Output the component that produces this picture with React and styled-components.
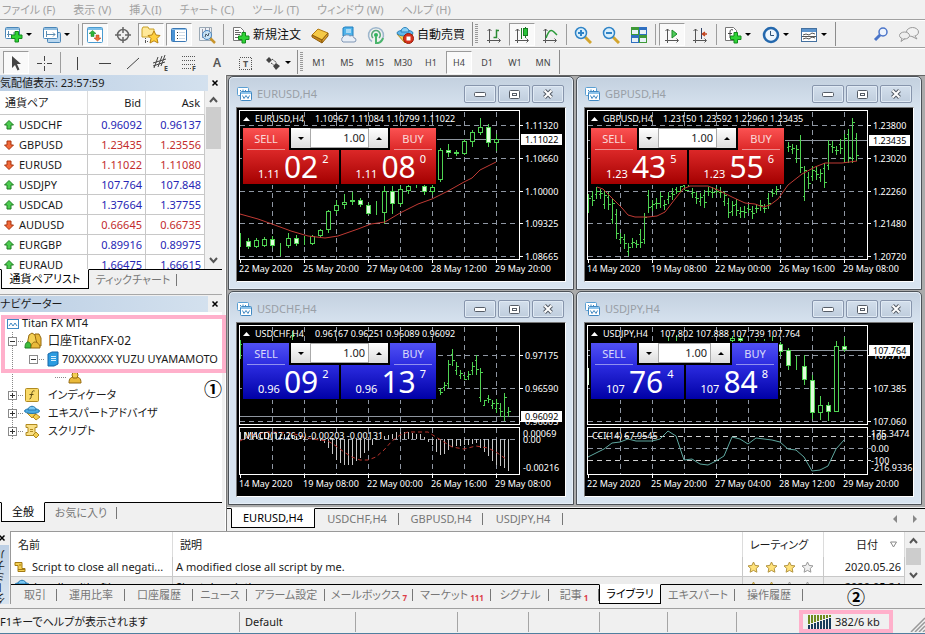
import React from 'react'
import styled, { createGlobalStyle, css } from 'styled-components'

const GlobalStyle = createGlobalStyle`
  * {
    box-sizing: border-box;
  }
  body {
    margin: 0;
    background: #f0f0f0;
    color: #1a1a1a;
    font: 11px/16px "Noto Sans", "Noto Sans CJK JP", sans-serif;
    font-feature-settings: "palt";
  }
  button, input {
    font: inherit;
    font-feature-settings: inherit;
    color: inherit;
    padding: 0;
    margin: 0;
    border: 0;
    border-radius: 0;
    background: none;
  }
  svg {
    display: block;
    flex: none;
  }
`

/* ---------- icons ---------- */

const Svg = ({ w = 18, h = 18, children }) => (
  <svg width={w} height={h} viewBox={`0 0 ${w} ${h}`} fill="none" aria-hidden="true">
    {children}
  </svg>
)

const Plus = ({ x = 7, y = 6 }) => (
  <path
    transform={`translate(${x} ${y})`}
    d="M4 .5h3.500V4H11v3.500H7.500V11H4V7.500H.5V4H4z"
    fill="#2fd336"
    stroke="#128a1c"
  />
)

const Axes = () => (
  <path d="M4.500 3v11.500H15M2.500 5l2-2 2 2M13.500 12.500l2 2-2 2M2 14.500h2.500V17" stroke="#555" />
)

const icons = {
  newChart: (
    <Svg>
      <rect x=".5" y="1.500" width="14" height="11" rx="1" fill="#fff" stroke="#4a86b8" />
      <path d="M1 3h13" stroke="#8fbde0" strokeWidth="2" />
      <path d="M3.500 5v6M2 8.500h5M9 6v3" stroke="#5a8bb0" />
      <Plus x={6} y={5} />
    </Svg>
  ),
  profiles: (
    <Svg>
      <rect x="4.500" y="6.500" width="13" height="10" rx="1" fill="#b9d7ef" stroke="#4a86b8" />
      <rect x=".5" y="1.500" width="14" height="11" rx="1" fill="#fff" stroke="#4a86b8" />
      <path d="M1 3h13" stroke="#8fbde0" strokeWidth="2" />
      <path d="M3.500 5v6M3 8.500h9M10 6.500l2 2-2 2" stroke="#5a8bb0" />
    </Svg>
  ),
  market: (
    <Svg>
      <rect x="1.500" y="1.500" width="15" height="15" rx="1" fill="#fff" stroke="#4a9bd0" />
      <path d="M2 3h14" stroke="#7fc0ea" strokeWidth="2" />
      <path d="M6.500 4.500l3.500 3H8v3H5v-3H3z" fill="#2fb53a" stroke="#177a20" strokeWidth=".5" />
      <path d="M11.500 15l3.500-3h-2V9h-3v3H8z" fill="#f07038" stroke="#b03a10" strokeWidth=".5" />
    </Svg>
  ),
  crosshair: (
    <Svg>
      <circle cx="9" cy="9" r="5.500" stroke="#666" strokeWidth="1.500" />
      <path d="M9 1v6M9 11v6M1 9h6M11 9h6" stroke="#666" strokeWidth="1.500" />
    </Svg>
  ),
  navigator: (
    <Svg w={20}>
      <path d="M1 3l1-2h5l1 2h5v8H1z" fill="#ffe99a" stroke="#c8a028" />
      <path d="M4.500 12v6M4 15.500h4" stroke="#555" strokeDasharray="1 1" />
      <path d="M13 5l2 4 4 .5-3 3 1 4.500-4-2.200L9 17l1-4.500-3-3 4-.5z" fill="#ffcf3c" stroke="#b98413" />
    </Svg>
  ),
  terminal: (
    <Svg>
      <rect x="1.500" y="2.500" width="15" height="13" rx="1" fill="#fff" stroke="#3a78b5" />
      <rect x="2" y="3" width="3" height="12" fill="#4b93d4" />
      <path d="M2 3.500h14" stroke="#8fc0e8" />
      <path d="M7 6.500h1M7 9.500h1M7 12.500h1" stroke="#333" />
      <path d="M9 6.500h6M9 9.500h6M9 12.500h6" stroke="#cfdbe6" />
    </Svg>
  ),
  tester: (
    <Svg>
      <path d="M1.500 1.500h12v13h-12z" fill="#eef2f6" stroke="#9aa8b4" />
      <path d="M4.500 3v9M7.500 2v10M11.500 2v5" stroke="#99a" />
      <path d="M12 12l5 5" stroke="#c8952c" strokeWidth="2.500" />
      <circle cx="9" cy="9" r="4.500" fill="#bfe0f7" fillOpacity=".8" stroke="#4a86c0" />
      <path d="M7 11l1-3 2 2 1-3" stroke="#456" />
    </Svg>
  ),
  newOrder: (
    <Svg>
      <path d="M1.500 1.500h7l3 3v10h-10z" fill="#fff" stroke="#777" />
      <path d="M3 4.500h4M3 6.500h6M3 8.500h5M3 11.500h3" stroke="#666" />
      <Plus x={6} y={6} />
    </Svg>
  ),
  metaEditor: (
    <Svg>
      <path d="M1 9l6-6 10 4-6 7z" fill="#f5c945" stroke="#b27a12" />
      <path d="M1 9l10 5v3L1 11z" fill="#c98a1a" stroke="#8f5d0c" />
      <path d="M11 14l6-7v3l-6 7z" fill="#e0a52c" stroke="#8f5d0c" />
    </Svg>
  ),
  cloud: (
    <Svg>
      <path d="M4 2l2-1h8v9H4z" fill="#4fb3ea" stroke="#1f7fbf" />
      <path d="M7 4h5M7 6h5" stroke="#fff" />
      <path d="M4 16a3 3 0 010-5 4 3 0 017-1 3 3 0 014 2 2 2 0 010 4z" fill="#e9eff7" stroke="#7f96b5" />
    </Svg>
  ),
  signals: (
    <Svg>
      <path d="M5 15.500a7.500 7.500 0 118 0" stroke="#9db6cc" strokeWidth="1.500" />
      <path d="M6 12a4.300 4.300 0 116 0" stroke="#58a878" strokeWidth="1.500" />
      <circle cx="9" cy="9" r="2" fill="#2fb35a" />
      <path d="M9 10v7h2a7 7 0 005-5" stroke="#4bb56c" strokeWidth="2" />
    </Svg>
  ),
  auto: (
    <Svg>
      <path d="M1 8l8 9 8-9z" fill="#f3cf52" stroke="#b98a1c" />
      <ellipse cx="9" cy="7" rx="8" ry="3" fill="#62b7ea" stroke="#2b83bd" />
      <path d="M5 6c0-6 8-6 8 0z" fill="#8bd0f5" stroke="#2b83bd" />
      <circle cx="12.500" cy="12.500" r="5" fill="#d9321c" stroke="#96190a" />
      <rect x="10.500" y="10.500" width="4" height="4" fill="#fff" />
    </Svg>
  ),
  bars: (
    <Svg>
      <Axes />
      <path d="M8.500 11.500h3V3.500M11.500 4.500h2.500" stroke="#2a8a34" strokeWidth="1.500" />
    </Svg>
  ),
  candles: (
    <Svg>
      <Axes />
      <path d="M8.500 2v11M12.500 1v11" stroke="#197a22" />
      <rect x="10.500" y="2.500" width="4" height="7" fill="#28c438" stroke="#197a22" />
    </Svg>
  ),
  line: (
    <Svg>
      <Axes />
      <path d="M5 12c3-8 5-9 8-6l3 3" stroke="#2a9a38" strokeWidth="1.500" />
    </Svg>
  ),
  zoomIn: (
    <Svg>
      <path d="M11 11l6 6" stroke="#d3a52e" strokeWidth="3" />
      <circle cx="7" cy="7" r="5.500" fill="#d9effc" stroke="#2f83c6" strokeWidth="1.500" />
      <path d="M7 4v6M4 7h6" stroke="#2f83c6" strokeWidth="2" />
    </Svg>
  ),
  zoomOut: (
    <Svg>
      <path d="M11 11l6 6" stroke="#d3a52e" strokeWidth="3" />
      <circle cx="7" cy="7" r="5.500" fill="#d9effc" stroke="#2f83c6" strokeWidth="1.500" />
      <path d="M4 7h6" stroke="#2f83c6" strokeWidth="2" />
    </Svg>
  ),
  tile: (
    <Svg>
      <path d="M1 1h8v8H1zM9 9h8v8H9z" fill="#3f9a38" />
      <path d="M9 1h8v8H9zM1 9h8v8H1z" fill="#2f6fc0" />
      <path d="M2 4h6v4H2zM10 4h6v4h-6zM2 12h6v4H2zM10 12h6v4h-6z" fill="#e8f2f8" />
    </Svg>
  ),
  scroll: (
    <Svg>
      <Axes />
      <path d="M9 4l5 4-5 4z" fill="#4ccb58" stroke="#1c8a28" />
    </Svg>
  ),
  shift: (
    <Svg>
      <Axes />
      <path d="M10.500 2v11" stroke="#346" />
      <path d="M16 8h-4M14 6l-2.500 2 2.500 2" stroke="#c0401c" strokeWidth="1.500" />
    </Svg>
  ),
  indicators: (
    <Svg>
      <path d="M1.500 1.500h8l3 3v10h-11z" fill="#fff" stroke="#777" />
      <path d="M9 4c-2-1-3 0-3 2v6M4 7.500h4" stroke="#444" />
      <Plus x={6} y={6} />
    </Svg>
  ),
  clock: (
    <Svg>
      <circle cx="9" cy="9" r="7" fill="#eef6fd" stroke="#2468ad" strokeWidth="2.500" />
      <path d="M8.500 5v4.500H12" stroke="#357" />
    </Svg>
  ),
  template: (
    <Svg>
      <rect x="1.500" y="2.500" width="15" height="13" fill="#fff" stroke="#44709f" />
      <path d="M2 4.500h14" stroke="#5d95cf" strokeWidth="3" />
      <path d="M3 9l3-1 3 1 3-2 3 1M3 13l3-1 3 1 3-2 3 1M2 10.500h14" stroke="#555" />
    </Svg>
  ),
  search: (
    <Svg>
      <path d="M3 15l6-6" stroke="#4a74c8" strokeWidth="3" />
      <circle cx="11" cy="7" r="4" fill="#eef4fd" stroke="#4a74c8" strokeWidth="1.500" />
    </Svg>
  ),
  chat: (
    <Svg w={22}>
      <ellipse cx="14.500" cy="7" rx="6" ry="4.500" fill="#f2f2f2" stroke="#999" />
      <path d="M17 11l2 3-5-2.500" fill="#f2f2f2" stroke="#999" />
      <ellipse cx="6.500" cy="10.500" rx="5" ry="3.500" fill="#eee" stroke="#999" />
      <path d="M4 13.500l-1 3 4-3" fill="#eee" stroke="#999" />
    </Svg>
  ),
  pointer: (
    <Svg>
      <path d="M5 2v12l3-3 2.500 5.500 2-1L10 10h4z" fill="#444" />
    </Svg>
  ),
  cross: (
    <Svg>
      <path d="M9.500 2v5M9.500 12v5M2 9.500h5M12 9.500h5M9 9.500h1" stroke="#444" />
    </Svg>
  ),
  vline: (
    <Svg>
      <path d="M9.500 3v13" stroke="#444" />
    </Svg>
  ),
  hline: (
    <Svg>
      <path d="M3 9.500h12" stroke="#444" />
    </Svg>
  ),
  trend: (
    <Svg>
      <path d="M3 15L15 4" stroke="#444" />
    </Svg>
  ),
  channel: (
    <Svg>
      <path d="M1 9l13-4M1 12l12-4M2 14l4-11M6 13l4-11M9 12l4-11" stroke="#444" />
      <text x="12" y="17" fontSize="7" fontWeight="700" fill="#444">E</text>
    </Svg>
  ),
  fibo: (
    <Svg>
      <path d="M2 2.500h13M2 6.500h13M2 10.500h13M2 14.500h9" stroke="#555" strokeDasharray="1 1" />
      <text x="12" y="17" fontSize="7" fontWeight="700" fill="#444">F</text>
    </Svg>
  ),
  label: (
    <Svg>
      <rect x="3.500" y="3.500" width="12" height="12" stroke="#555" strokeDasharray="1 1" shapeRendering="crispEdges" />
      <text x="7" y="13" fontSize="9" fontWeight="700" fill="#555">T</text>
    </Svg>
  ),
  arrows: (
    <Svg>
      <path d="M2 6l3-3 3 3-3 3zM9 12l3-3 4 3-4 4z" fill="#444" />
      <path d="M7 9l3 2M8 5l5 4" stroke="#444" strokeDasharray="2 1" />
    </Svg>
  ),
  windowChart: (
    <Svg w={15} h={15}>
      <rect x=".5" y=".5" width="11" height="8" rx="1" fill="#fff" stroke="#5a9fd2" />
      <path d="M3 3.500h1M6 2.500v2M8 3.500h1" stroke="#3f88c2" />
      <rect x="3.500" y="4.500" width="11" height="9" rx="1" fill="#fff" stroke="#3f88c2" />
      <path d="M4 6h10" stroke="#8fc4ea" strokeWidth="2" />
      <path d="M5.500 8.500l1.500 3 2-3 2 3 1.500-3" stroke="#3f88c2" />
    </Svg>
  ),
  up: (
    <Svg w={12} h={12}>
      <path d="M6 1.500l4.500 4.500H8v4H4V6H1.500z" fill="#4ccb4f" stroke="#1e7d22" />
    </Svg>
  ),
  down: (
    <Svg w={12} h={12}>
      <path d="M6 10.500L1.500 6H4V2h4v4h2.500z" fill="#f2693a" stroke="#a8340f" />
    </Svg>
  ),
  terminalRoot: (
    <Svg w={12} h={14}>
      <rect x=".5" y="3.500" width="11" height="9" fill="#fff" stroke="#3f88c2" />
      <path d="M2 10l2-3 2 3 2-3 2 3" stroke="#3f88c2" />
    </Svg>
  ),
  accounts: (
    <Svg>
      <path d="M9 8l2-6h4l2 4v8H9z" fill="#e9b93a" stroke="#94690f" />
      <path d="M4 8l1-5 3-2 3 2 1 5 2 6H3z" fill="#f4d054" stroke="#94690f" />
      <path d="M1 16c0-4 1-6 3-6s3 2 3 6z" fill="#3dbd3d" stroke="#1e7d22" />
      <path d="M7 16c0-4 2-6 4-6s5 2 5 6z" fill="#e9b93a" stroke="#94690f" />
    </Svg>
  ),
  server: (
    <Svg w={14} h={16}>
      <path d="M3 3l4-2h6v12l-4 2H3z" fill="#2b9be0" stroke="#1667a8" />
      <path d="M6 5.500h5M6 7.500h5M6 9.500h5" stroke="#d6efff" />
    </Svg>
  ),
  user: (
    <Svg w={14} h={14}>
      <path d="M1 13c0-5 2-6 6-6s6 1 6 6z" fill="#e9b93a" stroke="#94690f" />
      <path d="M4 5l1-3 2 1 2-1 1 3-1 3H5z" fill="#f4d054" stroke="#94690f" />
    </Svg>
  ),
  func: (
    <Svg h={16}>
      <rect x="1.500" y="1.500" width="13" height="13" rx="1" fill="#f9d968" stroke="#b08a20" />
      <path d="M10.500 4C8 3 8 6 7.500 8S7 12 5.500 12M5.500 7.500h4" stroke="#5d4a10" />
    </Svg>
  ),
  expert: (
    <Svg h={16}>
      <path d="M3 8l5 5 4-5z" fill="#f3cf52" stroke="#b98a1c" />
      <path d="M9 12l3-3 4 3-4 3z" fill="#f3cf52" stroke="#b98a1c" />
      <ellipse cx="8" cy="6" rx="7.500" ry="2.500" fill="#4aa9e0" stroke="#2478b0" />
      <path d="M4 5c0-5 8-5 8 0z" fill="#79c6f2" stroke="#2478b0" />
    </Svg>
  ),
  script: (
    <Svg h={16}>
      <path d="M2 1.500h11v3h-2v5h1v3H2v-3h2v-5H2z" fill="#f9df85" stroke="#b08a20" />
      <path d="M6 6.500h3M6 8.500h3" stroke="#b08a20" />
      <path d="M9 12l3-3 3 3-3 3z" fill="#f3cf52" stroke="#b08a20" />
    </Svg>
  ),
  scriptFile: (
    <Svg w={12} h={12}>
      <path d="M1 1.500h7v6h3v3H4v-6H1z" fill="#f4d054" stroke="#a37a12" />
      <path d="M4 8.500h7M5 4h2" stroke="#a37a12" />
    </Svg>
  ),
}

/* ---------- toolbars ---------- */

const Page = styled.div`
  min-height: 100vh;
  display: flex;
  flex-direction: column;
  overflow: hidden;
`
const MenuBar = styled.nav`
  height: 19px;
  display: flex;
  gap: 18px;
  padding-left: 2px;
  background: #f1f1f1;
`
const MenuItem = styled.button`
  color: #a2a2a2;
  line-height: 18px;
  white-space: nowrap;
`
const ToolRow = styled.div`
  height: 28px;
  display: flex;
  border-top: 1px solid #a0a0a0;
  box-shadow: inset 0 1px #fff;
  justify-content: space-between;
`
const Tools = styled.div`
  display: flex;
  align-items: center;
  padding: ${p => (p.$lead ? '1px 0 0 2px' : '1px 2px 0 0')};
  border-right: ${p => (p.$plain ? 0 : '1px solid #8c8c8c')};
`
const ToolButton = styled.button`
  height: 23px;
  width: ${p => (p.$wide ? 78 : p.$menu ? 36 : 26)}px;
  margin: 0 1px;
  flex: none;
  display: flex;
  align-items: center;
  justify-content: ${p => (p.$wide || p.$menu ? 'flex-start' : 'center')};
  gap: 3px;
  padding-left: ${p => (p.$wide ? 5 : p.$menu ? 4 : 0)}px;
  white-space: nowrap;
  font-size: ${p => (p.$wide ? 12 : 9)}px;
  color: ${p => (p.$wide ? '#111' : '#444')};
  ${p =>
    p['aria-pressed'] &&
    css`
      background: #f9f9f9;
      border: 1px solid #fff;
      border-top-color: #9a9a9a;
      border-left-color: #9a9a9a;
    `}
`
const Letter = styled.span`
  font-size: 12px;
  font-weight: 600;
  color: #555;
`
const Sep = styled.i`
  width: 5px;
  height: 21px;
  flex: none;
  background: linear-gradient(#9d9d9d, #9d9d9d) 2px 0 / 1px 100% no-repeat;
`
const Grip = styled.i`
  width: 3px;
  height: 20px;
  margin: 0 2px;
  background: repeating-linear-gradient(#999 0 1px, #f0f0f0 1px 2px);
`
const Caret = styled.i`
  border: 3px solid transparent;
  border-top-color: #000;
  border-bottom: 0;
`

const Tool = ({ icon, label, pressed, menu, wide }) => (
  <ToolButton aria-label={label} aria-pressed={pressed} $menu={menu} $wide={wide}>
    {icons[icon] || label}
    {wide && label}
    {menu && <Caret />}
  </ToolButton>
)

const menus = ['ファイル (F)', '表示 (V)', '挿入(I)', 'チャート (C)', 'ツール (T)', 'ウィンドウ (W)', 'ヘルプ (H)']
const periods = ['M1', 'M5', 'M15', 'M30', 'H1', 'H4', 'D1', 'W1', 'MN']

const Toolbars = () => (
  <>
    <MenuBar>
      {menus.map(m => (
        <MenuItem key={m}>{m}</MenuItem>
      ))}
    </MenuBar>
    <ToolRow>
      <Tools $plain>
        <Tools>
          <Tool icon="newChart" label="New chart" menu />
          <Tool icon="profiles" label="Profiles" menu />
          <Sep />
          <Tool icon="market" label="Market watch" pressed />
          <Tool icon="crosshair" label="Data window" />
          <Tool icon="navigator" label="Navigator" pressed />
          <Tool icon="terminal" label="Terminal" pressed />
          <Tool icon="tester" label="Strategy tester" />
          <Sep />
          <Tool icon="newOrder" label="新規注文" wide />
          <Tool icon="metaEditor" label="MetaEditor" />
          <Tool icon="cloud" label="Hosting" />
          <Tool icon="signals" label="Signals" />
          <Tool icon="auto" label="自動売買" wide />
        </Tools>
        <Grip />
        <Tools>
          <Tool icon="bars" label="Bar chart" />
          <Tool icon="candles" label="Candlesticks" pressed />
          <Tool icon="line" label="Line chart" />
          <Sep />
          <Tool icon="zoomIn" label="Zoom in" />
          <Tool icon="zoomOut" label="Zoom out" />
          <Tool icon="tile" label="Tile windows" />
          <Sep />
          <Tool icon="scroll" label="Auto scroll" pressed />
          <Tool icon="shift" label="Chart shift" />
          <Sep />
          <Tool icon="indicators" label="Indicators" menu />
          <Tool icon="clock" label="Periods" menu />
          <Tool icon="template" label="Templates" menu />
        </Tools>
      </Tools>
      <Tools $plain>
        <Tool icon="search" label="Search" />
        <Tool icon="chat" label="Chat" />
      </Tools>
    </ToolRow>
    <ToolRow>
      <Tools $plain>
        <Tools $lead>
          <Tool icon="pointer" label="Cursor" pressed />
          <Tool icon="cross" label="Crosshair" />
          <Sep />
          <Tool icon="vline" label="Vertical line" />
          <Tool icon="hline" label="Horizontal line" />
          <Tool icon="trend" label="Trendline" />
          <Tool icon="channel" label="Channel" />
          <Tool icon="fibo" label="Fibonacci" />
          <ToolButton>
            <Letter>A</Letter>
          </ToolButton>
          <Tool icon="label" label="Text label" />
          <Tool icon="arrows" label="Arrows" menu />
        </Tools>
        <Grip />
        <Tools>
          {periods.map(p => (
            <Tool key={p} label={p} pressed={p === 'H4' || undefined} />
          ))}
        </Tools>
      </Tools>
    </ToolRow>
  </>
)

/* ---------- shared panel parts ---------- */

const PanelTitle = styled.div`
  height: 16px;
  display: flex;
  justify-content: space-between;
  align-items: center;
  background: linear-gradient(90deg, #bccfe4, #d5e2ef);
`
const Close = styled.button`
  width: 14px;
  height: 16px;
  background: #f0f0f0;
  display: grid;
  place-items: center;
`
const CloseIcon = () => (
  <Svg w={8} h={8}>
    <path d="M1.500 1.500l5 5M6.500 1.500l-5 5" stroke="#000" strokeWidth="1.500" />
  </Svg>
)

const TabBar = styled.div`
  height: 20px;
  display: flex;
  border-top: 1px solid #000;
  padding-left: ${p => p.$indent || 1}px;
`
const Tab = styled.button`
  width: ${p => p.$width}px;
  display: flex;
  align-items: center;
  justify-content: center;
  white-space: nowrap;
  color: #777;
  background: linear-gradient(#777, #777) right 4px / 1px 12px no-repeat;
  ${p =>
    p.$active &&
    css`
      margin-top: -1px;
      color: #000;
      background: #fff;
      border: 1px solid #000;
      border-top-color: #fff;
    `}
`
const Count = styled.sub`
  font-size: 8px;
  line-height: 12px;
  font-weight: 700;
  color: #dc3c46;
  align-self: flex-end;
  margin-left: 2px;
`
const Tabs = ({ items, active, indent }) => (
  <TabBar $indent={indent}>
    {items.map(([name, width, count]) => (
      <Tab key={name} $width={width} $active={name === active}>
        {name}
        {count && <Count>{count}</Count>}
      </Tab>
    ))}
  </TabBar>
)

const Track = styled.div`
  width: 17px;
  flex: none;
  display: flex;
  flex-direction: column;
  align-items: center;
  justify-content: space-between;
  padding: 5px 0;
  background: #f0f0f0;
`
const Thumb = styled.i`
  width: 15px;
  height: ${p => p.$size}px;
  margin: 4px 0 auto;
  background: #cdcdcd;
`
const Scrollbar = ({ size }) => (
  <Track>
    <Svg w={9} h={7}>
      <path d="M1 6l3.500-4L8 6" stroke="#555" strokeWidth="2" />
    </Svg>
    <Thumb $size={size} />
    <Svg w={9} h={7}>
      <path d="M1 1l3.500 4L8 1" stroke="#555" strokeWidth="2" />
    </Svg>
  </Track>
)

/* ---------- market watch ---------- */

const Sidebar = styled.aside`
  width: 226px;
  flex: none;
  display: flex;
  flex-direction: column;
  padding-right: 3px;
  border-right: 1px solid #fff;
  position: relative;
`
const Scroller = styled.div`
  height: ${p => p.$height}px;
  display: flex;
  overflow: hidden;
  background: #fff;
`
const Table = styled.table`
  flex: 1;
  width: 100%;
  align-self: flex-start;
  table-layout: fixed;
  border-collapse: separate;
  border-spacing: 0;
`
const Head = styled.th`
  height: ${p => (p.$line ? 24 : 25)}px;
  padding: 0 4px 0 ${p => (p.$line ? 5 : 7)}px;
  font-weight: 400;
  text-align: ${p => p.$align || 'left'};
  border-right: 1px solid #dcdcdc;
  ${p => p.$line && 'border-bottom: 1px solid #c8c8c8;'}
`
const Cell = styled.td`
  height: 20px;
  padding: 0 3px;
  white-space: nowrap;
  border-right: 1px solid #c8c8c8;
  border-bottom: 1px solid #c8c8c8;
  text-align: ${p => p.$align || 'left'};
  color: ${p => p.$color || '#1a1a1a'};
`
const WithIcon = styled.span`
  display: flex;
  align-items: center;
  gap: ${p => p.$gap || 4}px;
`

const quotes = [
  ['USDCHF', '0.96092', '0.96137', true],
  ['GBPUSD', '1.23435', '1.23556', false],
  ['EURUSD', '1.11022', '1.11080', false],
  ['USDJPY', '107.764', '107.848', true],
  ['USDCAD', '1.37664', '1.37755', true],
  ['AUDUSD', '0.66645', '0.66735', false],
  ['EURGBP', '0.89916', '0.89975', true],
  ['EURAUD', '1.66475', '1.66615', true],
]

const MarketWatch = () => (
  <section>
    <PanelTitle>
      <span>気配値表示: 23:57:59</span>
      <Close aria-label="Close">
        <CloseIcon />
      </Close>
    </PanelTitle>
    <Scroller $height={178}>
      <Table>
        <colgroup>
          <col />
          <col width="58" />
          <col width="59" />
        </colgroup>
        <thead>
          <tr>
            <Head $line>通貨ペア</Head>
            <Head $line $align="right">Bid</Head>
            <Head $line $align="right">Ask</Head>
          </tr>
        </thead>
        <tbody>
          {quotes.map(([name, bid, ask, up]) => (
            <tr key={name}>
              <Cell>
                <WithIcon>
                  {up ? icons.up : icons.down}
                  {name}
                </WithIcon>
              </Cell>
              <Cell $align="right" $color={up ? '#2626b4' : '#c22c2c'}>{bid}</Cell>
              <Cell $align="right" $color={up ? '#2626b4' : '#c22c2c'}>{ask}</Cell>
            </tr>
          ))}
        </tbody>
      </Table>
      <Scrollbar size={42} />
    </Scroller>
    <Tabs items={[['通貨ペアリスト', 88], ['ティックチャート', 88]]} active="通貨ペアリスト" />
  </section>
)

/* ---------- navigator ---------- */

const NavPanel = styled.section`
  flex: 1;
  display: flex;
  flex-direction: column;
  margin: 5px 0 9px;
  padding-top: 1px;
  border-top: 1px solid #a8a8a8;
`
const Tree = styled.ul`
  flex: 1;
  margin: 0;
  padding: 2px 0 0;
  list-style: none;
  background: #fff;
  overflow: hidden;
`
const TreeRow = styled.li`
  height: 18px;
  display: flex;
  align-items: center;
  white-space: nowrap;
  padding-left: ${p => p.$pad}px;
  font-size: ${p => (p.$account ? 12 : 11)}px;
  background: ${p => (p.$root ? 'none' : 'repeating-linear-gradient(#888 0 1px, #fff 1px 2px) 12px 0 / 1px 100% no-repeat')};
`
const TreeName = styled.span`
  margin-left: ${p => (p.$near ? 3 : 6)}px;
`
const Expander = styled.button`
  width: 9px;
  height: 9px;
  flex: none;
  border: 1px solid #8a8a8a;
  background:
    linear-gradient(#333, #333) center / 5px 1px no-repeat,
    ${p => (p.$open ? 'none' : 'linear-gradient(#333, #333) center / 1px 5px no-repeat')},
    #fff;
`
const Branch = styled.i`
  width: ${p => (p.$long ? 12 : 5)}px;
  height: 1px;
  margin: 0 1px;
  flex: none;
  background: repeating-linear-gradient(90deg, #888 0 1px, #fff 1px 2px);
`
const Frame = styled.div`
  position: absolute;
  border: 4px solid #ffb0cb;
  pointer-events: none;
  ${p => (p.$at === 'tree' ? 'left: 1px; right: -1px; top: 240px; height: 58px;' : 'inset: -2px -2px -1px -2px;')}
`
const Mark = styled.span`
  position: absolute;
  font: 700 18px/20px "Noto Sans CJK JP", sans-serif;
  color: #000;
  ${p => (p.$at === 'tree' ? 'right: 3px; top: 303px;' : 'left: 46px; top: -26px;')}
`

const tree = [
  { pad: 7, icon: 'terminalRoot', name: 'Titan FX MT4', near: true },
  { pad: 8, icon: 'accounts', name: '口座TitanFX-02', state: 'open' },
  { pad: 29, icon: 'server', name: '70XXXXXX YUZU UYAMAMOTO', state: 'open', near: true },
  { pad: 54, icon: 'user', leaf: true },
  { pad: 8, icon: 'func', name: 'インディケータ', state: 'closed' },
  { pad: 8, icon: 'expert', name: 'エキスパートアドバイザ', state: 'closed' },
  { pad: 8, icon: 'script', name: 'スクリプト', state: 'closed' },
]

const Navigator = () => (
  <NavPanel>
    <PanelTitle>
      <span>ナビゲーター</span>
      <Close aria-label="Close">
        <CloseIcon />
      </Close>
    </PanelTitle>
    <Tree>
      {tree.map(({ pad, icon, name, state, near, leaf }) => (
        <TreeRow key={icon} $pad={pad} $root={icon === 'terminalRoot'} $account={icon === 'accounts'}>
          {state && <Expander aria-label={name} $open={state === 'open'} />}
          {(state || leaf) && <Branch $long={leaf} />}
          {icons[icon]}
          {name && <TreeName $near={near}>{name}</TreeName>}
        </TreeRow>
      ))}
    </Tree>
    <Tabs items={[['全般', 44], ['お気に入り', 72]]} active="全般" />
  </NavPanel>
)

/* ---------- chart windows ---------- */

const Work = styled.main`
  flex: 1;
  min-width: 0;
  display: flex;
  flex-direction: column;
  border-left: 1px solid #777;
`
const Desktop = styled.div`
  flex: 1;
  display: grid;
  grid-template-columns: 1fr 1fr;
  gap: 1px 2px;
  padding: 0 3px 2px 1px;
  border-top: 1px solid #666;
  background: #ababab;
`
const Window = styled.article`
  display: flex;
  flex-direction: column;
  padding: 0 7px 7px;
  border: 1px solid #4d5258;
  border-radius: 5px 5px 0 0;
  background: linear-gradient(#c3d0df, #d8e4f0 34px);
  box-shadow: inset 0 0 0 1px #e6eef7;
`
const TitleBar = styled.header`
  height: 30px;
  display: flex;
  align-items: center;
  gap: 2px;
  padding: 4px 2px 0 1px;
  color: #999fa6;
  h2 {
    flex: 1;
    margin: 0 0 0 3px;
    font-size: 11px;
    font-weight: 400;
  }
`
const WinButton = styled.button`
  width: 32px;
  height: 18px;
  display: grid;
  place-items: center;
  border: 1px solid #8795ac;
  border-radius: 2px;
  background: linear-gradient(#d3dfec, #bfcddd);
  box-shadow: inset 0 0 0 1px #e0eaf4;
`
const ChartFrame = styled.div`
  flex: 1;
  position: relative;
  border: 1px solid #777;
  border-right-color: #fff;
  border-bottom-color: #fff;
  background: #000;
  > svg {
    width: 100%;
  }
`
const Deal = styled.form`
  position: absolute;
  left: 6px;
  top: 20px;
  width: ${p => (p.$narrow ? 187 : 193)}px;
  display: grid;
  grid-template-columns: 1fr 1fr;
  gap: 2px;
  outline: 1px solid #000;
  background: #000;
`
const DealButton = styled.button`
  height: 56px;
  display: flex;
  flex-direction: column;
  align-items: stretch;
  color: #fff;
  background: ${p =>
    p.$up
      ? 'linear-gradient(#5050f4, #2c2ce0 22px, #0000a6)'
      : 'linear-gradient(#fb5252, #dc2828 22px, #a40000)'};
`
const Side = styled.span`
  width: 38px;
  height: 22px;
  margin: 0 4px;
  line-height: 21px;
  text-align: center;
  opacity: 0.8;
  border-bottom: 1px solid rgba(255, 255, 255, 0.6);
  ${p => p.$end && 'align-self: flex-end;'}
`
const Price = styled.span`
  height: 34px;
  display: flex;
  align-items: baseline;
  justify-content: flex-end;
  gap: 4px;
  padding-right: 10px;
  line-height: 33px;
  b {
    font-size: 30px;
    font-weight: 400;
  }
  sup {
    align-self: flex-start;
    font-size: 11px;
    line-height: 18px;
  }
`
const Lot = styled.div`
  position: absolute;
  left: 46px;
  right: 46px;
  top: 0;
  height: 22px;
  display: grid;
  grid-template-columns: 19px 1fr 19px;
  padding: 0 2px 2px;
  background: #000;
  button {
    display: grid;
    place-items: center;
    background: linear-gradient(#fff, #dcdcdc);
  }
  input {
    width: 100%;
    min-width: 0;
    padding-right: 3px;
    color: #222;
    text-align: right;
    background: #fff;
    border: 1px solid #aaa;
  }
`
const UpCaret = styled.i`
  border: 3px solid transparent;
  border-bottom-color: #000;
  border-top: 0;
`

const green = '#4fd352'
const gridX = [35, 67, 99, 131, 163, 195, 227, 259]

// candle: [slot, high, top, bottom, low, filled]
const Candles = ({ data }) =>
  data.map(([i, high, top, bottom, low, filled]) => {
    const x = 3 + i * 8
    return (
      <g key={i} stroke={green} fill={filled ? '#dfffdc' : '#000'}>
        <path d={`M${x + 0.5} ${high}V${low}`} />
        <rect x={x - 1.5} y={top + 0.5} width="4" height={Math.max(bottom - top - 1, 0)} />
      </g>
    )
  })

// bar: [high, low], one every 4px starting at the given slot
const Bars = ({ from = 0, data }) =>
  data.map(([high, low], i) => {
    const x = 3.5 + (from + i) * 4
    return (
      <path
        key={i}
        stroke={green}
        d={`M${x} ${high}V${low}M${x - 2} ${i % 2 ? high + 5.5 : low - 4.5}H${x}M${x} ${i % 2 ? low - 5.5 : high + 4.5}H${x + 2}`}
      />
    )
  })

const toPoints = list => list.map(p => p.join(',')).join(' ')

const Chart = ({ title, ohlc, ohlcX = 78, priceY, prices, dates, last, ma, sub, children }) => (
  <svg height="172" fontSize="9" fill="#fff" role="img" aria-label={title}>
    <g shapeRendering="crispEdges" fill="none">
      <g stroke="#8f97a3" strokeDasharray="5 4">
        {gridX.map(x => (
          <path key={x} d={`M${x + 0.5} 4V${sub ? 101 : 151}${sub ? `M${x + 0.5} 105V151` : ''}`} />
        ))}
        {prices.map(([y]) => (
          <path key={y} d={`M3 ${y + 0.5}H282`} />
        ))}
      </g>
      <path d={`M3 ${priceY + 0.5}H282`} stroke="#8e959e" />
      {children}
      <path
        stroke="#fff"
        d={sub ? 'M2.500 2.500H282.500V101.500H2.500zM2.500 104.500H282.500V151.500H2.500z' : 'M2.500 2.500H282.500V151.500H2.500z'}
      />
      <path stroke="#fff" d={prices.map(([y]) => `M283 ${y + 0.5}h3`).join('')} />
      <path stroke="#fff" d={[3, 67, 131, 195, 259].map(x => `M${x + 0.5} 152v3`).join('')} />
    </g>
    {ma && <polyline points={toPoints(ma)} fill="none" stroke="#c03a34" />}
    <path d="M6 13l3.500-4 3.500 4z" />
    <text x="18" y="14">{title}</text>
    <text x={ohlcX} y="14">{ohlc}</text>
    {prices.map(([y, label]) => (
      <text key={y} x="288" y={y + 4}>{label}</text>
    ))}
    {dates.map((d, i) => (
      <text key={d} x={2 + i * 64} y="164">{d}</text>
    ))}
    {sub}
    <rect x="284" y={priceY - 5} width="41" height="11" />
    <text x="288" y={priceY + 4} fill="#000">{last}</text>
  </svg>
)

const eurusd = [
  [0, 125, 133, 134, 139], [1, 130, 133, 139, 141, 1], [2, 130, 132, 139, 140], [3, 129, 131, 138, 139],
  [4, 128, 131, 138, 140, 1], [5, 135, 136, 137, 148], [6, 125, 130, 138, 140], [7, 127, 130, 136, 138, 1],
  [8, 128, 135, 136, 137], [9, 127, 128, 136, 137], [10, 121, 122, 128, 130], [11, 102, 103, 122, 125],
  [12, 92, 97, 103, 106], [13, 86, 94, 97, 101], [14, 84, 92, 94, 97], [15, 90, 92, 97, 99, 1],
  [16, 95, 97, 106, 107, 1], [17, 93, 104, 105, 107], [18, 78, 83, 105, 116], [19, 78, 83, 96, 106, 1],
  [20, 78, 81, 96, 98], [21, 77, 78, 83, 86], [22, 77, 77, 78, 80], [23, 77, 78, 84, 87, 1],
  [24, 77, 79, 84, 87], [25, 40, 42, 72, 74], [26, 36, 42, 45, 49, 1], [27, 42, 44, 46, 48],
  [28, 31, 33, 46, 47], [29, 22, 24, 34, 39], [30, 10, 19, 25, 27], [31, 16, 19, 35, 39, 1],
  [32, 26, 31, 35, 43],
]
const eurusdMa = [
  [3, 106], [21, 111], [35, 116], [54, 123], [71, 128], [88, 130], [101, 128], [121, 121], [134, 116], [148, 114],
  [163, 105], [181, 96], [195, 91], [211, 83], [227, 74], [235, 70], [243, 62], [251, 58], [259, 54],
]
const gbpusd = [
  [86, 105], [83, 98], [79, 91], [81, 91], [83, 101], [84, 102], [91, 116], [101, 131], [125, 136], [126, 141],
  [135, 148], [130, 140], [132, 140], [121, 140], [105, 136], [82, 105], [92, 103], [90, 101], [84, 100], [92, 102],
  [84, 96], [80, 92], [79, 86], [78, 84], [78, 82], [77, 79], [80, 90], [84, 96], [85, 98], [82, 100],
  [79, 88], [79, 90], [79, 86], [79, 90], [83, 98], [90, 110], [93, 108], [91, 108],
  [99, 110], [98, 110], [97, 105], [98, 111], [96, 105], [92, 103], [96, 105], [85, 101], [81, 89], [78, 87],
]
const gbpusdLate = [
  [34, 44], [36, 46], [37, 55], [27, 65], [58, 93], [64, 81], [58, 73], [58, 72], [61, 74], [55, 80],
  [32, 62], [33, 45], [38, 47], [31, 46], [26, 55], [21, 55], [10, 55], [25, 53],
]
const gbpusdMa = [
  [12, 79], [18, 81], [27, 90], [37, 100], [43, 107], [50, 109], [63, 109], [72, 108], [80, 104], [90, 91], [98, 81],
  [105, 78], [123, 78], [133, 82], [147, 89], [160, 95], [170, 96], [178, 99], [185, 97], [193, 91], [203, 77],
  [217, 66], [230, 59], [240, 55], [257, 55], [272, 53],
]
const usdchf = [
  [65, 72], [59, 68], [37, 65], [26, 43], [39, 52], [47, 56], [52, 57], [48, 57], [39, 52], [32, 52],
  [45, 79], [77, 83], [72, 80], [77, 86], [76, 90], [80, 94], [70, 98], [84, 94],
]
const macd = [
  109, 109, 109, 109, 109, 109, 109, 110, 110, 110, 111, 111, 112, 112, 113, 113, 114, 115, 115, 117, 118, 120, 125,
  131, 137, 140, 142, 142, 142, 138, 135, 130, 127, 122, 117, 115, 113, 112, 111, 109, 109, 109, 109, 110, 111, 111,
  114, 119, 122, 129, 132, 131, 127, 124, 123, 123, 122, 122, 121, 120, 125, 129, 133, 138, 142, 143, 145, 148,
]
const macdSignal = [
  [3, 118], [14, 112], [31, 109], [54, 110], [75, 116], [91, 118], [99, 123], [107, 129], [115, 134], [123, 137],
  [131, 137], [139, 134], [147, 127], [155, 118], [163, 112], [171, 109], [191, 109], [199, 114], [207, 119],
  [215, 124], [227, 126], [239, 123], [251, 125], [259, 129], [269, 136],
]
const usdjpy = [
  [10, 13, 16, 17, 18], [11, 12, 16, 17, 18], [18, 13, 15, 18, 19], [19, 13, 15, 18, 19, 1],
  [21, 16, 16, 17, 18], [22, 16, 16, 17, 18], [23, 13, 16, 17, 18],
  [24, 19, 21, 29, 33, 1], [25, 25, 27, 43, 47, 1], [26, 33, 42, 43, 47], [27, 32, 43, 57, 62, 1],
  [28, 52, 57, 90, 96, 1], [29, 73, 82, 90, 97], [30, 79, 82, 89, 98, 1], [31, 18, 23, 89, 89], [32, 14, 23, 27, 29, 1],
]
const cci = [
  134, 130, 126, 120, 119, 116, 118, 118, 118, 116, 108, 113, 137, 136, 141, 142, 138, 133, 114, 116, 121, 115, 116,
  117, 119, 126, 127, 134, 148, 147, 143, 126, 117,
].map((y, i) => [3 + i * 8, y])

const longDates = ['14 May 2020', '19 May 08:00', '22 May 00:00', '26 May 16:00', '29 May 08:00']
const shortDates = ['22 May 2020', '25 May 20:00', '27 May 04:00', '28 May 12:00', '29 May 20:00']

const charts = [
  {
    title: 'EURUSD,H4',
    sell: ['1.11', '02', '2'],
    buy: ['1.11', '08', '0'],
    view: (
      <Chart
        title="EURUSD,H4"
        ohlc="1.10967 1.11084 1.10799 1.11022"
        priceY={31}
        last="1.11022"
        prices={[[17, '1.11320'], [50, '1.10660'], [83, '1.10000'], [115, '1.09325'], [148, '1.08665']]}
        dates={shortDates}
        ma={eurusdMa}
      >
        <Candles data={eurusd} />
      </Chart>
    ),
  },
  {
    title: 'GBPUSD,H4',
    sell: ['1.23', '43', '5'],
    buy: ['1.23', '55', '6'],
    view: (
      <Chart
        title="GBPUSD,H4"
        ohlc="1.23150 1.23592 1.22960 1.23435"
        priceY={32}
        last="1.23435"
        prices={[[17, '1.23800'], [50, '1.23020'], [83, '1.22260'], [115, '1.21480'], [148, '1.20720']]}
        dates={longDates}
        ma={gbpusdMa}
      >
        <Bars data={gbpusd} />
        <Bars from={50} data={gbpusdLate} />
      </Chart>
    ),
  },
  {
    title: 'USDCHF,H4',
    up: true,
    sell: ['0.96', '09', '2'],
    buy: ['0.96', '13', '7'],
    view: (
      <Chart
        title="USDCHF,H4"
        ohlc="0.96167 0.96251 0.96089 0.96092"
        priceY={93}
        last="0.96092"
        prices={[[32, '0.97175'], [65, '0.96590'], [98, '0.96005']]}
        dates={longDates}
        sub={
          <>
            <g shapeRendering="crispEdges">
              <path d="M3 116.500H282" stroke="#8f97a3" strokeDasharray="5 4" />
              <path stroke="#c8c8c8" d={macd.map((y, i) => `M${3.5 + i * 4} 116V${y}`).join('')} />
            </g>
            <polyline points={toPoints(macdSignal)} fill="none" stroke="#b8322c" strokeDasharray="4 3" />
            <text x="7" y="116">MACD(12,26,9) -0.00203 -0.00131</text>
            <text x="286" y="114">0.00069</text>
            <text x="286" y="120">0.00</text>
            <text x="286" y="148">-0.00216</text>
          </>
        }
      >
        <Bars data={[[17, 36]]} />
        <Bars from={13} data={[[8, 17]]} />
        <Bars from={50} data={usdchf} />
      </Chart>
    ),
  },
  {
    title: 'USDJPY,H4',
    up: true,
    narrow: true,
    sell: ['107', '76', '4'],
    buy: ['107', '84', '8'],
    view: (
      <Chart
        title="USDJPY,H4"
        ohlc="107.802 107.888 107.739 107.764"
        ohlcX={75}
        priceY={27}
        last="107.764"
        prices={[[32, '107.710'], [65, '107.385'], [98, '107.060']]}
        dates={shortDates}
        sub={
          <>
            <g shapeRendering="crispEdges" strokeDasharray="5 4">
              <path d="M3 113.500H286M3 137.500H286" stroke="#d0d0d0" />
              <path d="M3 125.500H286" stroke="#8f97a3" />
            </g>
            <polyline points={toPoints(cci)} fill="none" stroke="#5fa8a0" />
            <text x="7" y="116">CCI(14) 67.9545</text>
            <text x="286" y="114">175.3474</text>
            <text x="286" y="117">100</text>
            <text x="286" y="129">0.00</text>
            <text x="286" y="141">-100</text>
            <text x="286" y="148">-216.9336</text>
          </>
        }
      >
        <Candles data={usdjpy} />
        <path d="M3.500 45V62" stroke="#dfffdc" />
      </Chart>
    ),
  },
]

const DealSide = ({ label, price, up, end }) => (
  <DealButton type="button" $up={up}>
    <Side $end={end}>{label}</Side>
    <Price>
      <span>{price[0]}</span>
      <b>{price[1]}</b>
      <sup>{price[2]}</sup>
    </Price>
  </DealButton>
)

const ChartWindow = ({ title, sell, buy, up, narrow, view }) => (
  <Window>
    <TitleBar>
      {icons.windowChart}
      <h2>{title}</h2>
      <WinButton aria-label="Minimize">
        <Svg w={12} h={6}>
          <rect x=".5" y="1.500" width="11" height="4" rx="1" fill="#fff" stroke="#555c66" />
        </Svg>
      </WinButton>
      <WinButton aria-label="Maximize">
        <Svg w={11} h={9}>
          <rect x=".5" y=".5" width="10" height="8" rx="1" fill="#fff" stroke="#555c66" />
          <rect x="3.500" y="3.500" width="4" height="2" stroke="#555c66" />
        </Svg>
      </WinButton>
      <WinButton aria-label="Close">
        <Svg w={12} h={10}>
          <path d="M2.500 1.500l7 7M9.500 1.500l-7 7" stroke="#555c66" strokeWidth="4" />
          <path d="M2.500 1.500l7 7M9.500 1.500l-7 7" stroke="#fff" strokeWidth="2" />
        </Svg>
      </WinButton>
    </TitleBar>
    <ChartFrame>
      {view}
      <Deal $narrow={narrow}>
        <DealSide label="SELL" price={sell} up={up} />
        <DealSide label="BUY" price={buy} up={up} end />
        <Lot>
          <button type="button" aria-label="Less">
            <Caret />
          </button>
          <input aria-label={`${title} lots`} defaultValue="1.00" />
          <button type="button" aria-label="More">
            <UpCaret />
          </button>
        </Lot>
      </Deal>
    </ChartFrame>
  </Window>
)

const ChartTabs = styled.div`
  display: flex;
  margin: 1px 0 3px;
  > div:first-child {
    flex: 1;
  }
`
const TabArrows = styled.div`
  display: flex;
  align-items: center;
  gap: 14px;
  padding-right: 8px;
  border-top: 1px solid #000;
`
const openCharts = [['EURUSD,H4', 84], ['USDCHF,H4', 84], ['GBPUSD,H4', 84], ['USDJPY,H4', 80]]

/* ---------- terminal ---------- */

const Main = styled.div`
  flex: 1;
  display: flex;
`
const Terminal = styled.section`
  display: flex;
  border-bottom: 1px solid #a0a0a0;
  padding-bottom: 4px;
`
const Strip = styled.div`
  width: 11px;
  flex: none;
  overflow: hidden;
  display: flex;
  flex-direction: column;
  border-right: 1px solid #999;
  > span {
    flex: 1 1 0px;
    min-height: 0;
    writing-mode: vertical-rl;
    transform: rotate(180deg);
    width: 16px;
    margin-left: -7px;
    background: linear-gradient(#d8e4f0, #bccfe4);
    font-size: 11px;
    line-height: 16px;
    white-space: nowrap;
  }
`
const StripClose = styled(Close)`
  width: 8px;
  height: 14px;
  margin-left: -2px;
`
const Body = styled.div`
  flex: 1;
  min-width: 0;
  padding-right: 3px;
  border-top: 1px solid #999;
`
const Row = styled.tr`
  background: ${p => (p.$alt ? '#ececec' : '#fff')};
`
const Sorted = styled.span`
  display: flex;
  align-items: center;
  justify-content: flex-end;
  gap: 12px;
  padding-right: 3px;
`
const Rating = styled.span`
  display: flex;
  gap: 5px;
  padding-left: 1px;
`
const Stars = ({ count }) => (
  <Rating>
    {[0, 1, 2, 3].map(i => (
      <Svg key={i} w={13} h={12}>
        <path
          d="M6.500 1l1.600 3.400 3.900.5-2.800 2.600.7 3.700-3.400-1.800-3.400 1.800.7-3.700L1 4.900l3.900-.5z"
          fill={i < count ? '#ffe27a' : '#f0f0f0'}
          stroke={i < count ? '#b39440' : '#999'}
        />
      </Svg>
    ))}
  </Rating>
)

const terminalTabs = [
  ['取引', 44], ['運用比率', 68], ['口座履歴', 68], ['ニュース', 54], ['アラーム設定', 78], ['メールボックス', 88, '7'],
  ['マーケット', 78, '111'], ['シグナル', 58], ['記事', 50, '1'], ['ライブラリ', 62], ['エキスパート', 74], ['操作履歴', 68],
]

const Library = () => (
  <Terminal>
    <Strip>
      <StripClose aria-label="Close">
        <CloseIcon />
      </StripClose>
      <span>ターミナル</span>
    </Strip>
    <Body>
      <Scroller $height={52}>
        <Table>
          <colgroup>
            <col width="162" />
            <col />
            <col width="81" />
            <col width="81" />
          </colgroup>
          <thead>
            <tr>
              <Head>名前</Head>
              <Head>説明</Head>
              <Head>レーティング</Head>
              <Head>
                <Sorted>
                  日付
                  <Svg w={7} h={7}>
                    <path d="M.5 1h6L3.500 6z" stroke="#888" />
                  </Svg>
                </Sorted>
              </Head>
            </tr>
          </thead>
          <tbody>
            <Row>
              <Cell>
                <WithIcon $gap={6}>{icons.scriptFile}Script to close all negati...</WithIcon>
              </Cell>
              <Cell>A modified close all script by me.</Cell>
              <Cell>
                <Stars count={3} />
              </Cell>
              <Cell $align="right">2020.05.26</Cell>
            </Row>
            <Row $alt>
              <Cell>
                <WithIcon $gap={2}>{icons.expert}Localhealthoftime</WithIcon>
              </Cell>
              <Cell>Short description</Cell>
              <Cell>
                <Stars count={2} />
              </Cell>
              <Cell $align="right">2020.05.24</Cell>
            </Row>
          </tbody>
        </Table>
        <Scrollbar size={17} />
      </Scroller>
      <Tabs items={terminalTabs} active="ライブラリ" indent={2} />
    </Body>
  </Terminal>
)

/* ---------- status bar ---------- */

const StatusBar = styled.footer`
  height: 25px;
  display: grid;
  grid-template-columns: 239px 116px 102px 71px 71px 68px 69px 65px 90px 1fr;
  padding: 3px 0 1px;
  border-bottom: 1px solid #4f7f9f;
`
const StatusCell = styled.div`
  position: relative;
  display: flex;
  align-items: center;
  gap: 3px;
  padding-left: ${p => (p.$first ? 0 : p.$line ? 5 : 7)}px;
  white-space: nowrap;
  ${p => p.$line && 'border-left: 1px solid #a5a5a5;'}
`
const ResizeGrip = styled.div`
  display: flex;
  align-items: flex-end;
  justify-content: flex-end;
`

const Status = () => (
  <StatusBar>
    <StatusCell $first>F1キーでヘルプが表示されます</StatusCell>
    <StatusCell $line>Default</StatusCell>
    <StatusCell $line />
    <StatusCell $line />
    <StatusCell $line />
    <StatusCell $line />
    <StatusCell $line />
    <StatusCell $line />
    <StatusCell>
      <Svg w={24} h={14}>
        {[0, 1, 2, 3, 4, 5, 6, 7].map(i => (
          <g key={i}>
            <rect x={i * 3} y="0" width="2" height={9 - i} fill="#6f8a1e" />
            <rect x={i * 3} y={10 - i} width="2" height={4 + i} fill="#163a5c" />
          </g>
        ))}
      </Svg>
      382/6 kb
      <Frame />
      <Mark>②</Mark>
    </StatusCell>
    <ResizeGrip>
      <Svg w={15} h={15}>
        <path d="M1 15L15 1M5 15L15 5M9 15l6-6M13 15l2-2" stroke="#999" strokeWidth="1.500" />
      </Svg>
    </ResizeGrip>
  </StatusBar>
)

const App = () => (
  <Page>
    <GlobalStyle />
    <Toolbars />
    <Main>
      <Sidebar>
        <MarketWatch />
        <Navigator />
        <Frame $at="tree" />
        <Mark $at="tree">①</Mark>
      </Sidebar>
      <Work>
        <Desktop>
          {charts.map(c => (
            <ChartWindow key={c.title} {...c} />
          ))}
        </Desktop>
        <ChartTabs>
          <Tabs items={openCharts} active="EURUSD,H4" indent={4} />
          <TabArrows>
            <Svg w={5} h={8}>
              <path d="M4 0v8L0 4z" fill="#888" />
            </Svg>
            <Svg w={5} h={8}>
              <path d="M1 0v8l4-4z" fill="#888" />
            </Svg>
          </TabArrows>
        </ChartTabs>
      </Work>
    </Main>
    <Library />
    <Status />
  </Page>
)

export default App
